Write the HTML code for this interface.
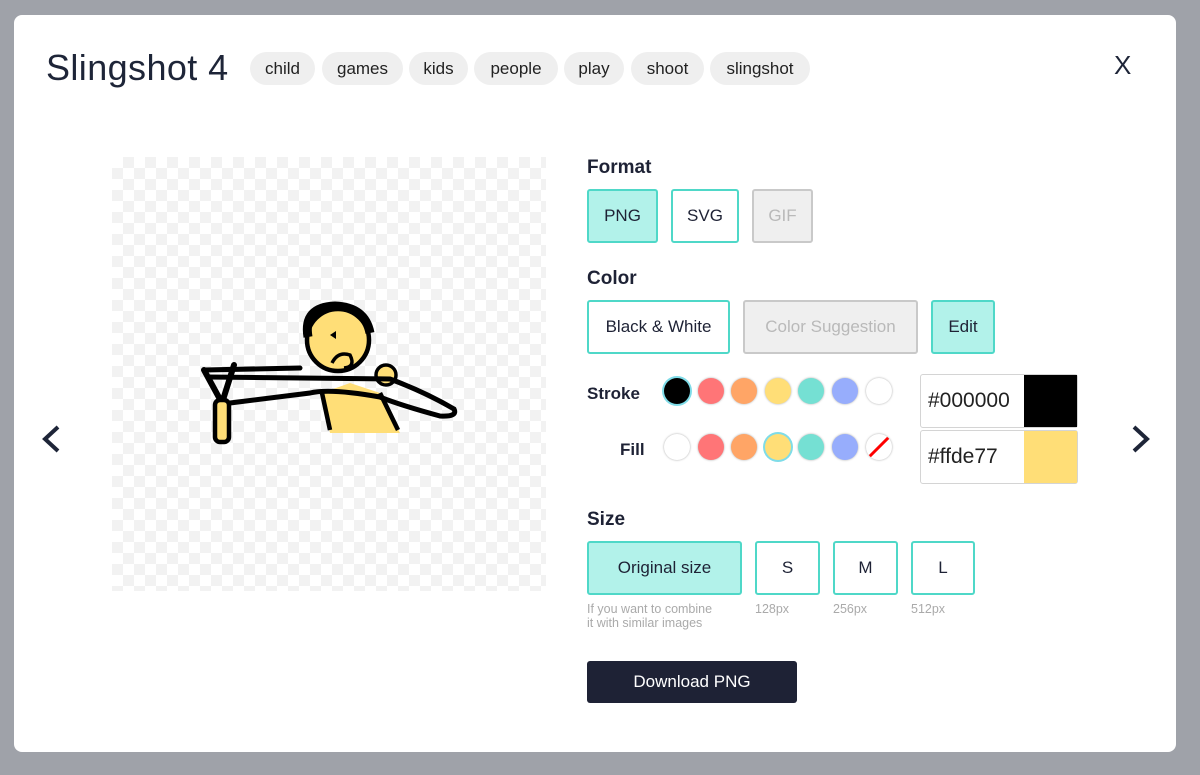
<!DOCTYPE html>
<html><head><style>
*{box-sizing:border-box;margin:0;padding:0}
body{width:1200px;height:775px;background:#9fa2a9;font-family:"Liberation Sans",sans-serif;position:relative;overflow:hidden;color:#1e2235}
.modal{position:absolute;left:14px;top:15px;width:1162px;height:737px;background:#fff;border-radius:8px}
.a{position:absolute}
h1{position:absolute;left:46px;top:47px;font-size:36px;font-weight:400;color:#1e2538;letter-spacing:0.4px}
.tag{position:absolute;top:52px;height:33px;border-radius:17px;background:#efefef;font-size:17px;line-height:33px;text-align:center;color:#222}
.check{position:absolute;left:112px;top:157px;width:434px;height:434px;background-color:#fff;background-image:linear-gradient(45deg,#f2f2f2 25%,transparent 25%,transparent 75%,#f2f2f2 75%),linear-gradient(45deg,#f2f2f2 25%,transparent 25%,transparent 75%,#f2f2f2 75%);background-size:22px 22px;background-position:0 0,11px 11px}
.lbl{position:absolute;font-size:19px;font-weight:700;color:#1e2235}
.btn{position:absolute;border:2px solid #4fd8c8;border-radius:3px;background:#fff;font-size:17px;text-align:center;color:#1e2235}
.btn.on{background:#b2f2ea}
.btn.dis{border-color:#c9c9c9;background:#efefef;color:#b9b9b9}
.dot{position:absolute;width:26px;height:26px;border-radius:50%;box-shadow:0 0 2px rgba(0,0,0,.35)}
.sel{box-shadow:0 0 0 2px #7fdce8}
.hex{position:absolute;left:920px;width:158px;height:54px;border:1px solid #d4d4d4;border-radius:3px;font-size:21px;line-height:52px;padding-left:7px;color:#222}
.sw{position:absolute;right:0;top:0;width:53px;height:52px}
.small{position:absolute;font-size:12.5px;color:#aaa;line-height:14px}
</style></head><body>
<div class="modal"></div>
<h1>Slingshot 4</h1>
<div class="tag" style="left:250px;width:65px">child</div>
<div class="tag" style="left:322px;width:81px">games</div>
<div class="tag" style="left:409px;width:59px">kids</div>
<div class="tag" style="left:474px;width:84px">people</div>
<div class="tag" style="left:564px;width:60px">play</div>
<div class="tag" style="left:631px;width:73px">shoot</div>
<div class="tag" style="left:710px;width:100px">slingshot</div>
<div class="a" style="left:1114px;top:50px;font-size:26px;color:#1e2538">X</div>
<svg class="a" style="left:36px;top:422px" width="30" height="34"><path d="M22 5 L9 17 L22 29" stroke="#1e2538" stroke-width="4" fill="none"/></svg>
<svg class="a" style="left:1126px;top:422px" width="30" height="34"><path d="M8 5 L21 17 L8 29" stroke="#1e2538" stroke-width="4" fill="none"/></svg>
<div class="check"></div>
<svg class="a" style="left:190px;top:295px" width="280" height="155" viewBox="0 0 280 155">
<path d="M140 138 L132 98 L160 88 L190 98 L210 138 Z" fill="#ffde77"/>
<path d="M132 98 L140 135 M190 98 L208 135" stroke="#000" stroke-width="4.5" fill="none"/>
<circle cx="148" cy="45" r="31" fill="#ffde77" stroke="#000" stroke-width="4.5"/>
<path d="M118 42 Q113 12 145 11 Q175 12 180 38" stroke="#000" stroke-width="9" fill="none"/>
<path d="M142 68 Q148 56 160 60 Q166 72 154 73" stroke="#000" stroke-width="3.5" fill="none"/>
<path d="M140 40 L146 36 L146 44 Z" fill="#000"/>
<circle cx="196" cy="80" r="10" fill="#ffde77" stroke="#000" stroke-width="3.5"/>
<path d="M14 75 L110 73 M18 82 L200 84 Q235 97 264 114 Q268 122 250 121 Q210 110 190 102 Q140 93 120 98 L40 108" stroke="#000" stroke-width="5" fill="none" stroke-linecap="round"/>
<path d="M14 75 L32 108 L44 70" stroke="#000" stroke-width="6" fill="none" stroke-linecap="round"/>
<rect x="25" y="105" width="14" height="42" rx="5" fill="#ffde77" stroke="#000" stroke-width="4.5"/>
</svg>
<div class="lbl" style="left:587px;top:157px">Format</div>
<div class="btn on" style="left:587px;top:189px;width:71px;height:54px;line-height:50px">PNG</div>
<div class="btn" style="left:671px;top:189px;width:68px;height:54px;line-height:50px">SVG</div>
<div class="btn dis" style="left:752px;top:189px;width:61px;height:54px;line-height:50px">GIF</div>
<div class="lbl" style="left:587px;top:268px">Color</div>
<div class="btn" style="left:587px;top:300px;width:143px;height:54px;line-height:50px">Black &amp; White</div>
<div class="btn dis" style="left:743px;top:300px;width:175px;height:54px;line-height:50px">Color Suggestion</div>
<div class="btn on" style="left:931px;top:300px;width:64px;height:54px;line-height:50px">Edit</div>
<div class="lbl" style="left:587px;top:384px;font-size:17px">Stroke</div>
<div class="lbl" style="left:620px;top:440px;font-size:17px">Fill</div>
<div class="dot sel" style="left:664px;top:378px;background:#000"></div>
<div class="dot" style="left:698px;top:378px;background:#ff7577"></div>
<div class="dot" style="left:731px;top:378px;background:#ffa566"></div>
<div class="dot" style="left:765px;top:378px;background:#ffde77"></div>
<div class="dot" style="left:798px;top:378px;background:#75e0d3"></div>
<div class="dot" style="left:832px;top:378px;background:#97adfc"></div>
<div class="dot" style="left:866px;top:378px;background:#fff"></div>
<div class="dot" style="left:664px;top:434px;background:#fff"></div>
<div class="dot" style="left:698px;top:434px;background:#ff7577"></div>
<div class="dot" style="left:731px;top:434px;background:#ffa566"></div>
<div class="dot sel" style="left:765px;top:434px;background:#ffde77"></div>
<div class="dot" style="left:798px;top:434px;background:#75e0d3"></div>
<div class="dot" style="left:832px;top:434px;background:#97adfc"></div>
<div class="dot" style="left:866px;top:434px;background:#fff;overflow:hidden"><svg width="26" height="26"><path d="M3 23 L23 3" stroke="#f00" stroke-width="3"/></svg></div>
<div class="hex" style="top:374px">#000000<div class="sw" style="background:#000"></div></div>
<div class="hex" style="top:430px">#ffde77<div class="sw" style="background:#ffde77"></div></div>
<div class="lbl" style="left:587px;top:509px">Size</div>
<div class="btn on" style="left:587px;top:541px;width:155px;height:54px;line-height:50px">Original size</div>
<div class="btn" style="left:755px;top:541px;width:65px;height:54px;line-height:50px">S</div>
<div class="btn" style="left:833px;top:541px;width:65px;height:54px;line-height:50px">M</div>
<div class="btn" style="left:911px;top:541px;width:64px;height:54px;line-height:50px">L</div>
<div class="small" style="left:587px;top:602px">If you want to combine<br>it with similar images</div>
<div class="small" style="left:755px;top:602px">128px</div>
<div class="small" style="left:833px;top:602px">256px</div>
<div class="small" style="left:911px;top:602px">512px</div>
<div class="a" style="left:587px;top:661px;width:210px;height:42px;background:#1e2235;border-radius:3px;color:#fff;font-size:17px;line-height:42px;text-align:center">Download PNG</div>
</body></html>
